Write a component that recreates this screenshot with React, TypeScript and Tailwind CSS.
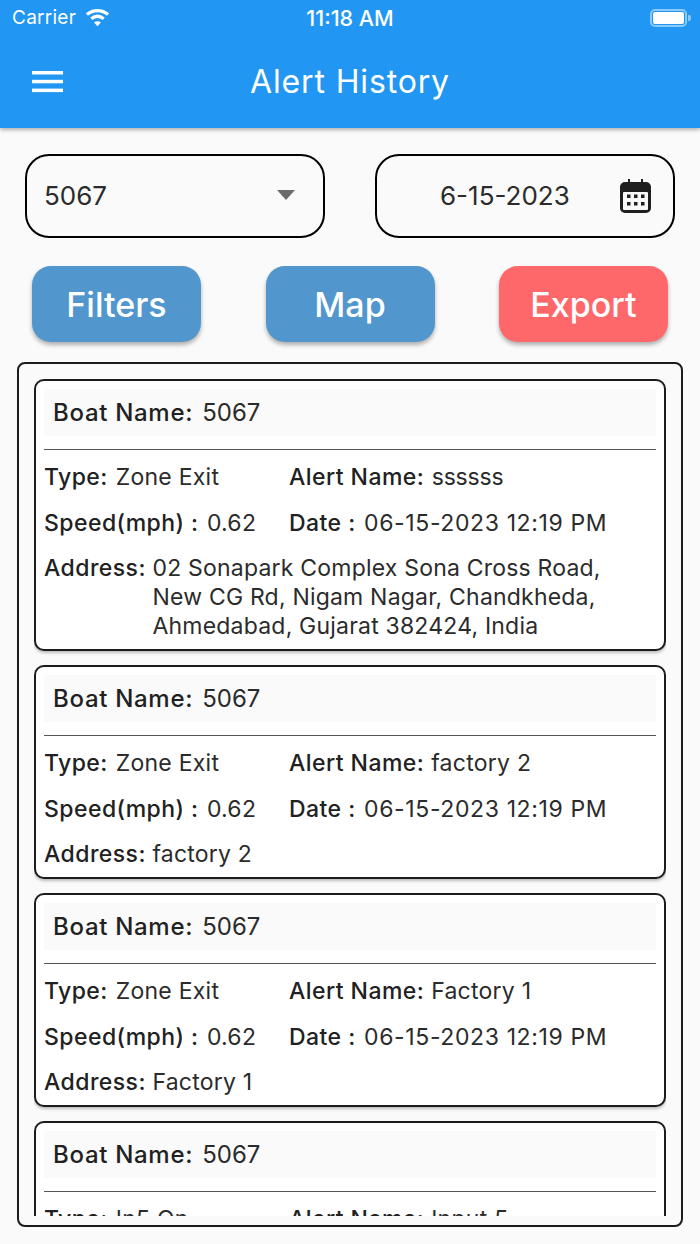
function Row({ label, value, className = "", valueClass = "ml-[8.5px] tracking-[0.25px]" }: { label: string; value: string; className?: string; valueClass?: string }) {
  return (
    <div className={"flex items-baseline whitespace-nowrap " + className}>
      <span className="font-medium text-[#212121] tracking-[0.45px]">{label}</span>
      <span className={"text-[#2b2b2b] " + valueClass}>{value}</span>
    </div>
  );
}

function Card({ type, alert, address }: { type: string; alert: string; address: string[] }) {
  return (
    <div className="shrink-0 rounded-[10px] border-2 border-[#1c1c1c] bg-white px-[8px] pt-[8px] pb-[8px] shadow-[0_2px_3px_rgba(0,0,0,0.25)]">
      <div className="h-[47px] bg-[#fafafa] pl-[9px] flex items-center text-[24px]">
        <div className="flex items-baseline whitespace-nowrap">
          <span className="font-medium text-[#212121] tracking-[0.7px]">Boat Name:</span>
          <span className="ml-[9px] text-[#2b2b2b]">5067</span>
        </div>
      </div>
      <div className="mt-[13px] h-[1px] bg-[#555]" />
      <div className="mt-[13px] text-[23px] leading-[28px]">
        <div className="flex">
          <Row className="w-[245px]" label="Type:" value={type} valueClass="ml-[8px] tracking-[0.25px]" />
          <Row label="Alert Name:" value={alert} valueClass={alert === "ssssss" ? "ml-[7.5px] tracking-[-0.2px]" : "ml-[7px] tracking-[0.25px]"} />
        </div>
        <div className="flex mt-[18px]">
          <Row className="w-[245px]" label="Speed(mph) :" value="0.62" />
          <Row label="Date :" value="06-15-2023 12:19 PM" valueClass="ml-[8.5px] tracking-[0.62px]" />
        </div>
        <div className="flex mt-[17px]">
          <span className="w-[108.5px] shrink-0 font-medium text-[#212121] tracking-[0.45px]">Address:</span>
          <div className="text-[#2b2b2b] leading-[29px] tracking-[0.2px]">
            {address.map((l) => (
              <div key={l} className="whitespace-nowrap">{l}</div>
            ))}
          </div>
        </div>
      </div>
    </div>
  );
}

function Btn({ label, color }: { label: string; color: string }) {
  return (
    <div className={"w-[169px] h-[76px] rounded-[19px] flex items-center justify-center text-white text-[34px] font-medium shadow-[0_3px_4px_rgba(0,0,0,0.3)] " + color}>
      {label}
    </div>
  );
}

export default function App() {
  return (
    <div className="w-[700px] h-[1244px] overflow-hidden bg-[#fafafa] flex flex-col font-['Inter',sans-serif]">
      <header className="h-[128px] shrink-0 bg-[#2196f3] text-white shadow-[0_2px_4px_rgba(0,0,0,0.3)] z-10">
        <div className="relative h-[36px] flex items-center justify-between pl-[12px] pr-[9px]">
          <div className="flex items-center gap-[9px]">
            <span className="text-[19px] tracking-[0.25px]">Carrier</span>
            <svg width="25" height="19" viewBox="0 0 26 19" fill="none" stroke="white" strokeWidth="3.4" className="-mt-[2px]">
              <path d="M2 6.5 C8.5 1 17.5 1 24 6.5" />
              <path d="M6.5 10.8 C10.5 7.6 15.5 7.6 19.5 10.8" />
              <path d="M13 18.5 L9.4 14.6 C11.5 13 14.5 13 16.6 14.6 Z" fill="white" stroke="none" />
            </svg>
          </div>
          <span className="absolute left-0 right-0 text-center text-[21.5px] font-medium pointer-events-none">11:18 AM</span>
          <div className="flex items-center gap-[1px]">
            <div className="w-[37px] h-[18px] rounded-[5px] border-2 border-[#8cc8f8] p-[1px]">
              <div className="w-full h-full rounded-[2px] bg-white" />
            </div>
            <div className="w-[3px] h-[6px] rounded-r-[2px] bg-[#8cc8f8]" />
          </div>
        </div>
        <div className="relative h-[92px] flex items-center justify-center">
          <svg width="32" height="24" viewBox="0 0 32 24" fill="white" className="absolute left-[32px] top-[35px]">
            <rect x="0" y="0" width="31" height="3.5" />
            <rect x="0" y="8.8" width="31" height="3.5" />
            <rect x="0" y="17.6" width="31" height="3.5" />
          </svg>
          <span className="text-[32px] tracking-[0.85px]">Alert History</span>
        </div>
      </header>

      <div className="flex justify-between px-[25px] mt-[26px]">
        <div className="w-[300px] h-[84px] rounded-[24px] border-2 border-black flex items-center justify-between pl-[17px] pr-[28px] pb-[2px] text-[26px] text-[#2b2b2b]">
          <span>5067</span>
          <svg width="18" height="10" viewBox="0 0 18 10" fill="#6b6b6b"><path d="M0 0 H18 L9 10 Z" /></svg>
        </div>
        <div className="relative w-[300px] h-[84px] rounded-[24px] border-2 border-black flex items-center pl-[63px] pb-[2px] text-[26px] text-[#2b2b2b]">
          <span>6-15-2023</span>
          <svg width="31" height="34" viewBox="0 0 31 34" className="absolute right-[22px] top-[23px]">
            <path fill="#1f1f1f" d="M5 3 h3 V0 h2 v3 h11 V0 h2 v3 h3 a5 5 0 0 1 5 5 v21 a5 5 0 0 1 -5 5 H5 a5 5 0 0 1 -5 -5 V8 a5 5 0 0 1 5 -5 Z" />
            <rect x="3" y="13" width="25" height="18" rx="1" fill="#fafafa" />
            <path fill="#1f1f1f" d="M7 15.500h3.500v3.500H7zM14 15.500h3.500v3.500h-3.500zM21 15.500h3.500v3.500h-3.500zM7 23h3.500v3.500H7zM14 23h3.500v3.500h-3.500zM21 23h3.500v3.500h-3.500z" />
          </svg>
        </div>
      </div>

      <div className="flex justify-between px-[32px] mt-[28px]">
        <Btn label="Filters" color="bg-[#5197cd]" />
        <Btn label="Map" color="bg-[#5197cd]" />
        <Btn label="Export" color="bg-[#ff686b]" />
      </div>

      <div className="mx-[17px] mt-[20px] h-[865px] rounded-[8px] border-2 border-[#1c1c1c] pt-[15px] pb-[9px] px-[15px]">
        <div className="h-full overflow-hidden flex flex-col gap-[14px]">
          <Card
            type="Zone Exit"
            alert="ssssss"
            address={["02 Sonapark Complex Sona Cross Road,", "New CG Rd, Nigam Nagar, Chandkheda,", "Ahmedabad, Gujarat 382424, India"]}
          />
          <Card type="Zone Exit" alert="factory 2" address={["factory 2"]} />
          <Card type="Zone Exit" alert="Factory 1" address={["Factory 1"]} />
          <Card type="In5 On" alert="Input 5" address={["Input 5"]} />
        </div>
      </div>
    </div>
  );
}
